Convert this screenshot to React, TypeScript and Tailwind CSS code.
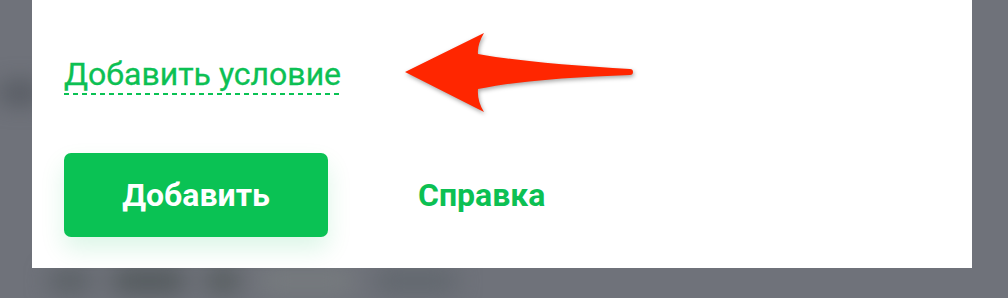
import React from 'react';

const font = { fontFamily: 'Roboto, "Noto Sans", sans-serif' };

function Arrow() {
  return (
    <svg
      width="250"
      height="100"
      viewBox="0 0 250 100"
      className="absolute left-[395px] top-[25px] drop-shadow-[1px_2px_2px_rgba(0,0,0,0.35)]"
    >
      <path
        d="M10 47 L89 8 Q82 20 83 29 C120 36 180 41 235 44 A3 3 0 0 1 235 50 C180 52 120 56 83 64 Q82 76 89 87 Z"
        fill="#ff2600"
      />
    </svg>
  );
}

export default function App() {
  return (
    <div className="relative h-[298px] w-[1008px] overflow-hidden bg-[#6f727a]" style={font}>
      {/* blurred page behind the modal */}
      <div className="absolute inset-0 blur-md">
        <div className="absolute left-0 top-[85px] h-[16px] w-[40px] rounded bg-[#4c5158]" />
        <div className="absolute left-[50px] top-[272px] flex items-center gap-6">
          <div className="h-[18px] w-[40px] rounded bg-[#555c60]" />
          <div className="h-[18px] w-[70px] rounded bg-[#4a5253]" />
          <div className="h-[18px] w-[30px] rounded bg-[#4d5554]" />
          <div className="h-[18px] w-[90px] rounded bg-[#7a7f80]" />
          <div className="h-[18px] w-[80px] rounded bg-[#5d646a]" />
        </div>
      </div>

      {/* modal */}
      <div className="absolute left-[32px] top-0 flex h-[268px] w-[940px] flex-col bg-white px-[32px]">
        <div className="mt-[56px] self-start">
          <span className="block text-[32px] leading-[36px] text-[#0cc053] [-webkit-text-stroke:0.3px_#0cc053]">Добавить условие</span>
          <div className="mt-[1px] h-[2px] w-full bg-[linear-gradient(to_right,#0ac254_5px,transparent_5px)] bg-[length:9px_2px] bg-repeat-x" />
        </div>
        <div className="mt-[58px] flex items-center">
          <button className="flex h-[84px] w-[264px] items-center justify-center rounded-[7px] bg-[#0ac254] text-[32px] font-bold text-white shadow-[0_12px_24px_rgba(10,194,84,0.14)]">
            Добавить
          </button>
          <button className="ml-[90px] text-[32px] font-bold text-[#0cc053]">Справка</button>
        </div>
      </div>

      <Arrow />
    </div>
  );
}
